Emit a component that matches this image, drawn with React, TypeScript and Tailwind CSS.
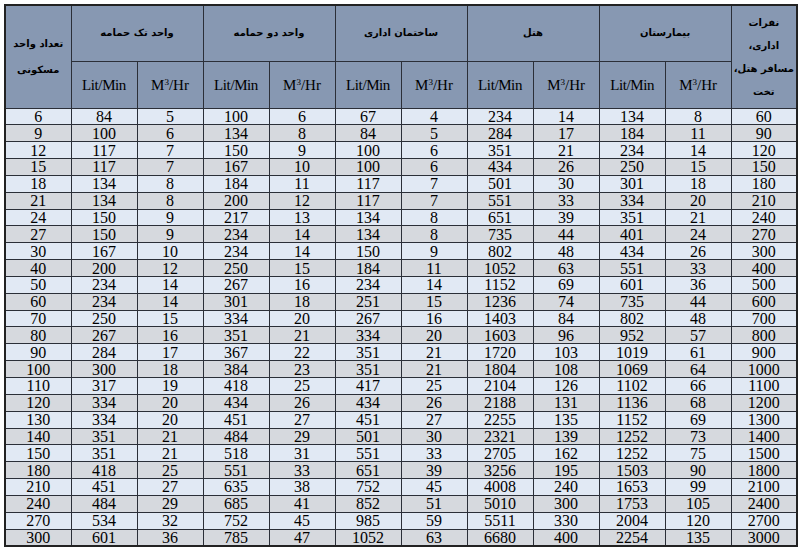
import React from 'react';

const groups = ['واحد تک حمامه', 'واحد دو حمامه', 'ساختمان اداری', 'هتل', 'بیمارستان'];

// columns: units, [single bath lit, m3], [double bath lit, m3], [office lit, m3], [hotel lit, m3], [hospital lit, m3], people
const rows: number[][] = [
  [6, 84, 5, 100, 6, 67, 4, 234, 14, 134, 8, 60],
  [9, 100, 6, 134, 8, 84, 5, 284, 17, 184, 11, 90],
  [12, 117, 7, 150, 9, 100, 6, 351, 21, 234, 14, 120],
  [15, 117, 7, 167, 10, 100, 6, 434, 26, 250, 15, 150],
  [18, 134, 8, 184, 11, 117, 7, 501, 30, 301, 18, 180],
  [21, 134, 8, 200, 12, 117, 7, 551, 33, 334, 20, 210],
  [24, 150, 9, 217, 13, 134, 8, 651, 39, 351, 21, 240],
  [27, 150, 9, 234, 14, 134, 8, 735, 44, 401, 24, 270],
  [30, 167, 10, 234, 14, 150, 9, 802, 48, 434, 26, 300],
  [40, 200, 12, 250, 15, 184, 11, 1052, 63, 551, 33, 400],
  [50, 234, 14, 267, 16, 234, 14, 1152, 69, 601, 36, 500],
  [60, 234, 14, 301, 18, 251, 15, 1236, 74, 735, 44, 600],
  [70, 250, 15, 334, 20, 267, 16, 1403, 84, 802, 48, 700],
  [80, 267, 16, 351, 21, 334, 20, 1603, 96, 952, 57, 800],
  [90, 284, 17, 367, 22, 351, 21, 1720, 103, 1019, 61, 900],
  [100, 300, 18, 384, 23, 351, 21, 1804, 108, 1069, 64, 1000],
  [110, 317, 19, 418, 25, 417, 25, 2104, 126, 1102, 66, 1100],
  [120, 334, 20, 434, 26, 434, 26, 2188, 131, 1136, 68, 1200],
  [130, 334, 20, 451, 27, 451, 27, 2255, 135, 1152, 69, 1300],
  [140, 351, 21, 484, 29, 501, 30, 2321, 139, 1252, 73, 1400],
  [150, 351, 21, 518, 31, 551, 33, 2705, 162, 1252, 75, 1500],
  [180, 418, 25, 551, 33, 651, 39, 3256, 195, 1503, 90, 1800],
  [210, 451, 27, 635, 38, 752, 45, 4008, 240, 1653, 99, 2100],
  [240, 484, 29, 685, 41, 852, 51, 5010, 300, 1753, 105, 2400],
  [270, 534, 32, 752, 45, 985, 59, 5511, 330, 2004, 120, 2700],
  [300, 601, 36, 785, 47, 1052, 63, 6680, 400, 2254, 135, 3000],
];

const fa = 'font-["DejaVu_Sans",sans-serif] text-[10px] font-bold';
const serif = 'font-["Liberation_Serif","Times_New_Roman",serif]';

export default function App() {
  return (
    <div className="w-[800px] h-[550px] bg-white pt-[4px] pl-[4px]">
      <table className={`w-[794px] table-fixed border-collapse border-2 border-[#222] text-black ${serif}`}>
        <colgroup>
          {Array.from({ length: 12 }).map((_, i) => (
            <col key={i} className="w-[66px]" />
          ))}
        </colgroup>
        <thead className="bg-[#8798b2]">
          <tr className="h-[56px]">
            <th rowSpan={2} className={`border border-[#2b2f38] align-middle leading-[26px] ${fa}`} dir="rtl">
              تعداد واحد
              <br />
              مسکونی
            </th>
            {groups.map((g) => (
              <th key={g} colSpan={2} className={`border border-[#2b2f38] align-middle pb-[2px] ${fa}`} dir="rtl">
                {g}
              </th>
            ))}
            <th rowSpan={2} className={`border border-[#2b2f38] align-middle leading-[23px] ${fa}`} dir="rtl">
              نفرات
              <br />
              اداری،
              <br />
              مسافر هتل،
              <br />
              تخت
            </th>
          </tr>
          <tr className="h-[47px]">
            {groups.map((g) => (
              <React.Fragment key={g}>
                <th className={`border border-[#2b2f38] font-normal text-[15px] tracking-[-0.4px] pt-[2px] ${serif}`}>
                  Lit/Min
                </th>
                <th className={`border border-[#2b2f38] font-normal text-[15px] pt-[2px] ${serif}`}>
                  M<span className="text-[9px] align-[5px]">3</span>/Hr
                </th>
              </React.Fragment>
            ))}
          </tr>
        </thead>
        <tbody>
          {rows.map((r, i) => (
            <tr key={i} className={i % 2 === 0 ? 'bg-[#e1e9f4]' : 'bg-[#d6d9de]'} style={{ height: 16.85 }}>
              {r.map((v, j) => (
                <td key={j} className={`border border-[#2b2f38] text-center text-[16px] leading-[15px] p-0 ${serif}`}>
                  {v}
                </td>
              ))}
            </tr>
          ))}
        </tbody>
      </table>
    </div>
  );
}
